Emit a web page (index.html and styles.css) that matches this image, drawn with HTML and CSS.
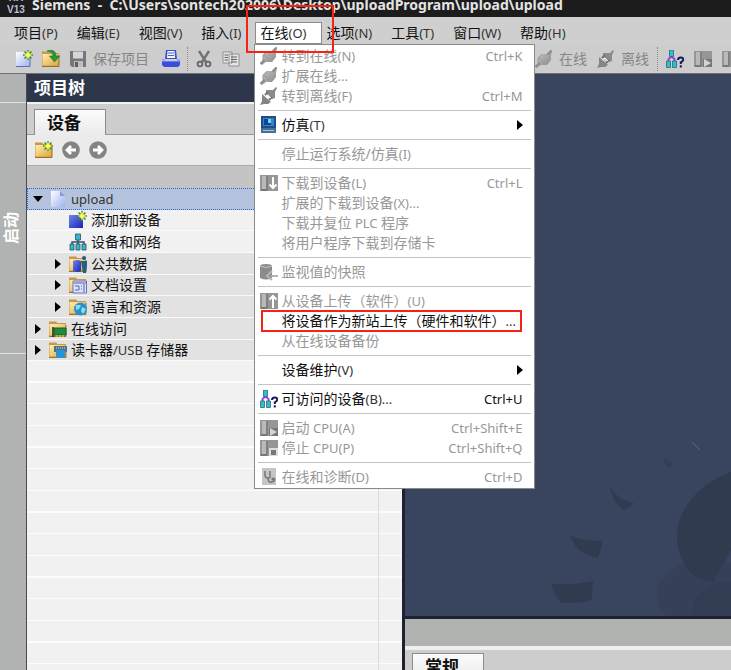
FILE: index.html
```html
<!DOCTYPE html>
<html lang="zh-CN">
<head>
<meta charset="utf-8">
<title>Siemens - upload</title>
<link rel="stylesheet" href="styles.css">
</head>
<body>
<svg class="defs" aria-hidden="true">
  <defs>
    <linearGradient id="gFolder" x1="0" y1="0" x2="1" y2="1"><stop offset="0" stop-color="#fff0b0"/><stop offset="1" stop-color="#e0a43c"/></linearGradient>
    <linearGradient id="gPage" x1="0" y1="0" x2="1" y2="1"><stop offset="0" stop-color="#ffffff"/><stop offset="1" stop-color="#9fb0ee"/></linearGradient>
    <linearGradient id="gBlue" x1="0" y1="0" x2="1" y2="1"><stop offset="0" stop-color="#6f86f0"/><stop offset="1" stop-color="#1a22b0"/></linearGradient>
    <linearGradient id="gGrey" x1="0" y1="0" x2="1" y2="1"><stop offset="0" stop-color="#cccccc"/><stop offset="1" stop-color="#858585"/></linearGradient>
  </defs>
  <symbol id="spark" viewBox="0 0 10 10"><path d="M5 0v10M0 5h10M1.500 1.500l7 7M8.500 1.500l-7 7" stroke="#3f8f4a" stroke-width="1.600"/><path d="M5 1.500v7M1.500 5h7" stroke="#f6f22a" stroke-width="1.600"/><circle cx="5" cy="5" r="2.200" fill="#ffff50"/></symbol>
  <symbol id="folder" viewBox="0 0 18 18"><path d="M0 3V1.500h7L8.500 3H17v13H0z" fill="#c8984a"/><path d="M.5 4h16v11.500H.5z" fill="url(#gFolder)"/><path d="M0 16.500h17V5" fill="none" stroke="#9c7026"/></symbol>
  <symbol id="new" viewBox="0 0 18 18"><path d="M1 2h10l4 5v9.500H1z" fill="url(#gPage)"/><path d="M1 16.500h14V8" fill="none" stroke="#5c6dc0"/><use href="#spark" x="8" y="0" width="10" height="10"/></symbol>
  <symbol id="open" viewBox="0 0 18 18"><use href="#folder" width="18" height="18"/><path d="M5 1c5-2 9 0 9 5h3.500l-5 6-5-6H11c0-3-2-4-6-5z" fill="#249a38" stroke="#12702a" stroke-width=".6"/></symbol>
  <symbol id="save" viewBox="0 0 18 18"><path d="M1 1h16v16H3l-2-2z" fill="#777"/><path d="M4 1.500h10v7H4z" fill="#d6d6d6"/><path d="M5 11h9v6H5z" fill="#bebebe"/><path d="M6 12h3v5H6z" fill="#606060"/></symbol>
  <symbol id="print" viewBox="0 0 18 18"><path d="M4 0h10l1 9H3z" fill="#3c50c8"/><path d="M5.500 1h7l.6 7H5z" fill="#f4f7ff"/><path d="M6 3h6M6 5.500h6" stroke="#4c64c8"/><path d="M0 9h3v2h12V9h3v6l-2 2H2l-2-2z" fill="#3a50dc"/><path d="M0 9h3v2h12V9h3v2.500H0z" fill="#92a5ff"/></symbol>
  <symbol id="cut" viewBox="0 0 18 18"><path d="M4 1l7 11M14 1L7 12" stroke="#737373" stroke-width="2.400"/><circle cx="5" cy="14" r="2.400" fill="none" stroke="#666" stroke-width="1.800"/><circle cx="13" cy="14" r="2.400" fill="none" stroke="#666" stroke-width="1.800"/></symbol>
  <symbol id="copy" viewBox="0 0 18 18"><path d="M1 2h9v11H1zM7 4h10v12H7z" fill="#e6e6e6" stroke="#909090"/><path d="M2.500 5H6M2.500 7.500H6M2.500 10H6M9 7h6M9 9.500h6M9 12h6" stroke="#5e5e5e" stroke-width="1.200"/></symbol>
  <symbol id="plug" viewBox="0 0 18 18"><path d="M0 16l3-3 0-5 4-4 6 0 3-4 1 1-1 5 0 4-4 5H6l-4 3z" fill="url(#gGrey)"/><path d="M3 13V8l4-4M4 8l8 7" fill="none" stroke="#999"/><path d="M12.500 4.500l4-4M0.500 17l4-4" stroke="#8a8a8a" stroke-width="2"/></symbol>
  <symbol id="unplug" viewBox="0 0 18 18"><path d="M6 3h7l3-3 1 1-2 4v6l-3 1-6-6z" fill="#8a8a8a"/><path d="M2 7l9 8-3 2H4l-4 1 2-4z" fill="#858585"/><path d="M8 5L5 8M12 10l-3 3" stroke="#757575" stroke-width="2"/><path d="M5 10l3-2 3 3" fill="none" stroke="#eee"/></symbol>
  <symbol id="sim" viewBox="0 0 18 18"><path d="M1 0h15v12H1z" fill="#1c4f87"/><path d="M3 2h11v8H3z" fill="#3886bd"/><path d="M4 3h7v6H4z" fill="#1640a0"/><path d="M8 3h3v4H8z" fill="#64dbe5"/><path d="M1 12h15v5H1z" fill="#456f94"/><path d="M3 14.500h11" stroke="#aec4d4"/></symbol>
  <symbol id="rack" viewBox="0 0 18 18"><path d="M0 1h18v16H0z" fill="#969696"/><path d="M2 2h4v13H2z" fill="#b9b9b9"/><path d="M7 2v14" stroke="#6d6d6d"/><path d="M1 16h6" stroke="#777" stroke-width="2"/></symbol>
  <symbol id="down" viewBox="0 0 18 18"><use href="#rack" width="18" height="18"/><path d="M13 3v10M9.500 10.500L13 14l3.500-3.500" fill="none" stroke="#fff" stroke-width="2"/></symbol>
  <symbol id="up" viewBox="0 0 18 18"><use href="#rack" width="18" height="18"/><path d="M13 16V5M9.500 7.500L13 4l3.500 3.500" fill="none" stroke="#fff" stroke-width="2"/></symbol>
  <symbol id="run" viewBox="0 0 18 18"><use href="#rack" width="18" height="18"/><path d="M9 9h9v8H9z" fill="#777"/><path d="M10 9l7 4-7 4z" fill="#d4d4d4"/></symbol>
  <symbol id="stop" viewBox="0 0 18 18"><use href="#rack" width="18" height="18"/><path d="M9 9h9v8H9z" fill="#ddd"/><path d="M11 11h5v5h-5z" fill="#777"/></symbol>
  <symbol id="snap" viewBox="0 0 18 18"><path d="M0 3q0-2 6-2t6 2v12q-6 3-12 0z" fill="#8c8c8c"/><path d="M0 3q6 3 12 0" fill="none" stroke="#c6c6c6"/><path d="M18 13h-7M12 8l-5 5 5 4" fill="none" stroke="#b4b4b4" stroke-width="2"/></symbol>
  <symbol id="diag" viewBox="0 0 18 18"><path d="M2 0h14v17H2z" fill="#c5c5c5"/><path d="M5 3v4q0 3 3 3t2-3V3M8 10q0 5 4 4t2-4" fill="none" stroke="#777" stroke-width="1.500"/><circle cx="13" cy="11" r="1.600" fill="#777"/></symbol>
  <symbol id="net" viewBox="0 0 18 18"><path d="M9 5v5M3 13V9h12v4M9 9v4" fill="none" stroke="#34506a" stroke-width="1.500"/><path d="M6.500 1h5v6h-5zM1 11h4v6H1zM7 11h4v6H7zM13 11h4v6h-4z" fill="#37b9c4" stroke="#254e6c" stroke-width=".8"/></symbol>
  <symbol id="access" viewBox="0 0 18 18"><path d="M2.500 12V9l3-2.500 3 2.500v3" fill="none" stroke="#a040e0" stroke-width="2"/><path d="M3.500 0h4v6.500h-4zM0.500 11h4v6.500h-4zM6.500 11h4v6.500h-4z" fill="#30c0c8" stroke="#276a82" stroke-width=".8"/><path d="M12 10q0-2.500 2.700-2.500t2.500 2.200q0 1.500-2.400 2.600v1.700M14.800 15.200v2.200" fill="none" stroke="#17175c" stroke-width="2"/></symbol>
  <symbol id="page" viewBox="0 0 18 18"><path d="M2 1h9l5 5v11H2z" fill="url(#gPage)"/><path d="M11 1v5h5z" fill="#8798dd"/></symbol>
  <symbol id="add" viewBox="0 0 18 18"><path d="M0 4h14v13H0z" fill="url(#gBlue)"/><use href="#spark" x="8" y="0" width="10" height="10"/></symbol>
  <symbol id="data" viewBox="0 0 18 18"><use href="#folder" width="18" height="18"/><path d="M4 6q4-2 8 0v10q-4 2-8 0z" fill="url(#gBlue)"/><circle cx="15" cy="3" r="2" fill="#265b78"/><path d="M12 6h6v5l-1 7h-3l-1-6z" fill="#226080"/></symbol>
  <symbol id="doc" viewBox="0 0 18 18"><use href="#folder" width="18" height="18"/><path d="M4 5h13.500v12H4z" fill="#dce2ff" stroke="#6572b5"/><path d="M5 7h12M6 10h4v4H6M12 10h1M12 13h1M15 8v8" fill="none" stroke="#5260aa"/></symbol>
  <symbol id="globe" viewBox="0 0 18 18"><use href="#folder" width="18" height="18"/><circle cx="11.500" cy="11" r="6.500" fill="#2a8fd0"/><path d="M7 7l5 0-2 4-3 1zM13 9l4 2-3 5-2-3z" fill="#8adfe8"/></symbol>
  <symbol id="online" viewBox="0 0 18 18"><use href="#folder" width="18" height="18"/><path d="M4 7v10" stroke="#222" stroke-width="1.500"/><path d="M5 8h12v7H5z" fill="#1f8a3c" stroke="#14602c"/><path d="M8 15v2M11 15v2M14 15v2" stroke="#c4c03a" stroke-width="1.500"/></symbol>
  <symbol id="card" viewBox="0 0 18 18"><use href="#folder" width="18" height="18"/><path d="M5 5h13v6H5z" fill="#4f7185"/><path d="M7 7h9" stroke="#dce7ee" stroke-dasharray="1 1"/><path d="M7 9h9v8H9l-2-2z" fill="#2594d6"/></symbol>
  <symbol id="newfolder" viewBox="0 0 18 18"><use href="#folder" width="18" height="18"/><use href="#spark" x="8" y="0" width="10" height="10"/></symbol>
  <symbol id="back" viewBox="0 0 18 18"><circle cx="9" cy="9" r="8.800" fill="#848484"/><path d="M14 9H6M9 5L5 9l4 4" fill="none" stroke="#fff" stroke-width="2.800"/></symbol>
  <symbol id="fwd" viewBox="0 0 18 18"><circle cx="9" cy="9" r="8.800" fill="#848484"/><path d="M4 9h8M9 5l4 4-4 4" fill="none" stroke="#fff" stroke-width="2.800"/></symbol>
</svg>

<div class="app">
  <header class="titlebar">
    <span class="logo"><span>TIA</span><span>V13</span></span>
    <span class="caption">Siemens&nbsp; -&nbsp; C:\Users\sontech202006\Desktop\uploadProgram\upload\upload</span>
  </header>

  <nav class="menubar">
    <button>项目<span class="key">(P)</span></button>
    <button>编辑<span class="key">(E)</span></button>
    <button>视图<span class="key">(V)</span></button>
    <button>插入<span class="key">(I)</span></button>
    <div class="open-menu">
      <button class="active" aria-expanded="true">在线<span class="key">(O)</span></button>
      <div class="dropdown" role="menu">
        <button disabled><svg><use href="#plug"/></svg><span>转到在线<span class="key">(N)</span></span><kbd>Ctrl+K</kbd></button>
        <button disabled><svg><use href="#plug"/></svg><span>扩展在线<span class="key">...</span></span></button>
        <button disabled><svg><use href="#unplug"/></svg><span>转到离线<span class="key">(F)</span></span><kbd>Ctrl+M</kbd></button>
        <hr>
        <button><svg><use href="#sim"/></svg><span>仿真<span class="key">(T)</span></span><i class="arrow"></i></button>
        <hr>
        <button disabled><svg></svg><span>停止运行系统/仿真<span class="key">(I)</span></span></button>
        <hr>
        <button disabled><svg><use href="#down"/></svg><span>下载到设备<span class="key">(L)</span></span><kbd>Ctrl+L</kbd></button>
        <button disabled><svg></svg><span>扩展的下载到设备<span class="key">(X)...</span></span></button>
        <button disabled><svg></svg><span>下载并复位<span class="key"> PLC </span>程序</span></button>
        <button disabled><svg></svg><span>将用户程序下载到存储卡</span></button>
        <hr>
        <button disabled><svg><use href="#snap"/></svg><span>监视值的快照</span></button>
        <hr>
        <button disabled><svg><use href="#up"/></svg><span>从设备上传（软件）<span class="key">(U)</span></span></button>
        <button class="marked"><svg></svg><span>将设备作为新站上传（硬件和软件）<span class="key">...</span></span></button>
        <button disabled><svg></svg><span>从在线设备备份</span></button>
        <hr>
        <button><svg></svg><span>设备维护<span class="key">(V)</span></span><i class="arrow"></i></button>
        <hr>
        <button><svg><use href="#access"/></svg><span>可访问的设备<span class="key">(B)...</span></span><kbd>Ctrl+U</kbd></button>
        <hr>
        <button disabled><svg><use href="#run"/></svg><span>启动<span class="key"> CPU(A)</span></span><kbd>Ctrl+Shift+E</kbd></button>
        <button disabled><svg><use href="#stop"/></svg><span>停止<span class="key"> CPU(P)</span></span><kbd>Ctrl+Shift+Q</kbd></button>
        <hr>
        <button disabled><svg><use href="#diag"/></svg><span>在线和诊断<span class="key">(D)</span></span><kbd>Ctrl+D</kbd></button>
      </div>
      <div class="highlight"></div>
    </div>
    <button>选项<span class="key">(N)</span></button>
    <button>工具<span class="key">(T)</span></button>
    <button>窗口<span class="key">(W)</span></button>
    <button>帮助<span class="key">(H)</span></button>
  </nav>

  <div class="toolbar">
    <div class="tools">
      <button aria-label="新建"><svg><use href="#new"/></svg></button>
      <button aria-label="打开"><svg><use href="#open"/></svg></button>
      <button disabled><svg><use href="#save"/></svg>保存项目</button>
      <button class="print" aria-label="打印"><svg><use href="#print"/></svg></button>
      <i class="dots"></i>
      <button aria-label="剪切"><svg><use href="#cut"/></svg></button>
      <button aria-label="复制"><svg><use href="#copy"/></svg></button>
    </div>
    <div class="tools connect">
      <button disabled><svg><use href="#plug"/></svg>在线</button>
      <button disabled><svg><use href="#unplug"/></svg>离线</button>
      <i class="dots"></i>
      <button aria-label="可访问的设备"><svg><use href="#access"/></svg></button>
      <button aria-label="启动"><svg><use href="#run"/></svg></button>
      <button aria-label="停止"><svg><use href="#stop"/></svg></button>
    </div>
  </div>

  <main class="body">
    <aside class="strip"><button>启动</button></aside>
    <section class="project">
      <h1>项目树</h1>
      <div class="tabs"><button class="tab">设备</button></div>
      <div class="tree-tools">
        <button aria-label="新建组"><svg><use href="#newfolder"/></svg></button>
        <button aria-label="后退"><svg><use href="#back"/></svg></button>
        <button aria-label="前进"><svg><use href="#fwd"/></svg></button>
      </div>
      <div class="column-head"></div>
      <div class="tree-body">
        <ul class="tree">
          <li class="root selected"><i class="arrow down"></i><svg><use href="#page"/></svg><span class="key">upload</span></li>
          <li class="plain"><i></i><svg><use href="#add"/></svg>添加新设备</li>
          <li class="plain"><i></i><svg><use href="#net"/></svg>设备和网络</li>
          <li><i class="arrow"></i><svg><use href="#data"/></svg>公共数据</li>
          <li><i class="arrow"></i><svg><use href="#doc"/></svg>文档设置</li>
          <li><i class="arrow"></i><svg><use href="#globe"/></svg>语言和资源</li>
          <li class="root"><i class="arrow"></i><svg><use href="#online"/></svg>在线访问</li>
          <li class="root"><i class="arrow"></i><svg><use href="#card"/></svg><span>读卡器<span class="key">/USB </span>存储器</span></li>
        </ul>
        <div class="blank"></div>
      </div>
    </section>
    <section class="work">
      <div class="canvas">
        <svg class="scene" viewBox="0 0 200 186" aria-hidden="true">
          <ellipse cx="176" cy="165" rx="50" ry="36" fill="#364159"/>
          <path d="M200 42C165 54 146 82 146 107c0 22 12 36 22 42l14 3 18-32z" fill="#303b50"/>
          <path d="M160 186c2-24 20-36 40-34v34z" fill="#323d53"/>
          <path d="M79 57c7 10 14 14 24 16l-9 7c-7-3-13-11-15-23z" fill="#303b50"/>
          <path d="M39 105c8 5 21 6 33 6l-5 17c-13-2-24-9-28-23z" fill="#303b50"/>
          <path d="M20 154h24l18-3-1 18q-4 4-30 4-7-5-11-19z" fill="#303b50"/>
          <path d="M132 28l10 6-3 4q-6-2-7-10z" fill="#333e55"/>
          <path d="M161 12l8 8" stroke="#5a667f"/>
        </svg>
      </div>
      <div class="bar"></div>
      <div class="tabs inspector"><button class="tab">常规</button></div>
    </section>
  </main>
</div>
</body>
</html>
```

FILE: styles.css
```css
* { box-sizing: border-box; }

body {
  margin: 0;
  overflow: hidden;
  font: 14px/20px "Noto Sans", "Noto Sans CJK SC", sans-serif;
  color: #111;
}

button {
  flex: none;
  margin: 0;
  padding: 0;
  border: 0;
  background: none;
  font: inherit;
  color: inherit;
  white-space: nowrap;
}

svg { flex: none; width: 18px; height: 18px; }
.defs { position: absolute; width: 0; height: 0; }
.key { font-size: 13px; color: #333; white-space: pre; }

.app { display: flex; flex-direction: column; height: 100vh; }

/* Title bar */
.titlebar {
  display: flex;
  flex: none;
  gap: 6px;
  height: 17px;
  padding-left: 7px;
  overflow: hidden;
  background: #1c1c1c;
  color: #e4e4e4;
  white-space: nowrap;
}
.caption { font-weight: 700; line-height: 10px; }
.logo {
  display: flex;
  flex-direction: column;
  width: 19px;
  margin-top: -8px;
  font: 700 10px/12px "Liberation Sans", sans-serif;
  color: #b7bedb;
}

/* Menu bar */
.menubar {
  display: flex;
  flex: none;
  gap: 19px;
  height: 29px;
  padding: 5px 14px 0;
  background: #cfcfcf;
}
.menubar > button, .active { height: 22px; }
.open-menu { position: relative; height: 22px; margin: 0 -15px 0 -6px; }
.active {
  padding: 0 15px 0 5px;
  border: 1px solid #8c8c8c;
  background: #fff;
}

.dropdown {
  position: absolute;
  z-index: 2;
  top: 22px;
  left: -1px;
  width: 281px;
  padding: 1px 3px;
  border: 1px solid #8a8a8a;
  background: #fff;
}
.dropdown button {
  position: relative;
  display: flex;
  align-items: center;
  gap: 4px;
  width: 100%;
  height: 20px;
  padding: 0 8px 0 2px;
  text-align: left;
}
.dropdown button:disabled, .dropdown button:disabled .key { color: #989898; }
.dropdown hr {
  height: 1px;
  margin: 4px 0;
  border: 0;
  background: #c4c4c4;
}
.dropdown kbd { margin-left: auto; font: inherit; font-size: 13px; }
.arrow {
  flex: none;
  border: solid transparent;
  border-width: 5px 0 5px 6px;
  border-left-color: #000;
}
.dropdown .arrow { margin-left: auto; }
.marked::after {
  content: "";
  position: absolute;
  inset: -1px 9px -1px 3px;
  border: 2px solid #f52314;
}
.highlight {
  position: absolute;
  z-index: 3;
  inset: -17px -12px -9px -9px;
  border: 2px solid #f52314;
  pointer-events: none;
}

/* Toolbar */
.toolbar {
  display: flex;
  flex: none;
  height: 28px;
  padding: 0 0 2px 15px;
  border-bottom: 1px solid #6c7078;
  background: #cdcdcd;
  overflow: hidden;
}
.tools { display: flex; flex: none; align-items: center; gap: 9px; }
.tools button { display: flex; align-items: center; gap: 6px; }
.tools button:disabled { color: #868686; }
.tools .print { margin-left: 4px; }
.tools .dots { height: 24px; margin: 0 -2px; border-left: 1px dotted #8c8c8c; }
.connect { gap: 10px; margin-left: 295px; }

/* Work area */
.body { display: flex; flex: 1; min-height: 0; }
.strip {
  flex: none;
  display: flex;
  flex-direction: column;
  width: 27px;
  padding-top: 28px;
  border-right: 1px solid #4a4a4a;
  background: #b1b3b2;
}
.strip button {
  height: 252px;
  padding-right: 4px;
  border: solid #e2e2e2;
  border-width: 1px 0;
  color: #fff;
  font-size: 16px;
  font-weight: 700;
  writing-mode: sideways-lr;
}

.project {
  display: flex;
  flex: none;
  flex-direction: column;
  width: 378px;
  border-right: 3px solid #1e2131;
  background: #f1f1f1;
}
h1 {
  flex: none;
  height: 30px;
  margin: 0;
  padding-left: 7px;
  border-bottom: 2px solid #f2f2f2;
  background: #2d364a;
  color: #fff;
  font-size: 17px;
  line-height: 27px;
}
.tabs {
  display: flex;
  flex: none;
  align-items: flex-end;
  height: 31px;
  padding-left: 7px;
  border-bottom: 1px solid #999;
  background: #cdcdcd;
}
.tab {
  width: 72px;
  height: 26px;
  margin-bottom: -1px;
  padding-right: 12px;
  border: 1px solid #8c8c8c;
  border-bottom: 0;
  background: linear-gradient(#fbfbfb, #ebebeb);
  font-size: 17px;
  font-weight: 700;
  line-height: 22px;
}
.tree-tools {
  display: flex;
  flex: none;
  align-items: center;
  gap: 9px;
  height: 30px;
  padding-left: 8px;
  background: #ebebeb;
}
.tree-tools button { height: 18px; }
.tree-tools svg { display: block; }
.column-head {
  flex: none;
  height: 23px;
  border-top: 1px solid #aaa;
  background: #c4c4c4;
}
.tree-body { display: flex; flex: 1; flex-direction: column; min-height: 0; }
.tree { margin: 0; padding: 0; list-style: none; }
.tree li {
  display: flex;
  align-items: center;
  gap: 4px;
  height: 22px;
  padding-left: 28px;
  border-bottom: 1px solid #fafafa;
  background: #e2e2e2;
}
.tree li:nth-child(3n + 2) { height: 21px; }
.tree li.root { padding-left: 8px; }
.tree li.plain { background: #f1f1f1; }
.tree li.selected { border: 1px dotted #3565c8; background: #b5c4de; padding-left: 5px; }
.tree i { width: 10px; border-right: 4px solid transparent; }
.tree .arrow { border-right-width: 0; border-left-width: 6px; width: 6px; margin-right: 4px; }
.tree .down {
  width: 10px;
  margin-right: 2px;
  border-width: 6px 5px 0;
  border-color: #000 transparent transparent;
}
.blank {
  flex: 1;
  background:
    linear-gradient(90deg, transparent 351px, #dcdcdc 351px, #dcdcdc 352px, transparent 352px),
    repeating-linear-gradient(#f1f1f1 0 20px, #fcfcfc 20px 22px, #f1f1f1 22px 42px, #fcfcfc 42px 43px, #f1f1f1 43px 64px, #fcfcfc 64px 65px);
}

.work { display: flex; flex: 1; flex-direction: column; min-width: 0; }
.canvas {
  display: flex;
  flex: 1;
  align-items: flex-end;
  justify-content: flex-end;
  min-height: 0;
  border-bottom: 3px solid #1e2131;
  background: #39445f;
}
.scene { width: 200px; height: 186px; }
.bar { flex: none; height: 31px; border-bottom: 4px solid #efefef; background: #b1b3b1; }
.inspector { align-items: flex-start; height: 20px; padding-top: 3px; border: 0; overflow: hidden; }
```
